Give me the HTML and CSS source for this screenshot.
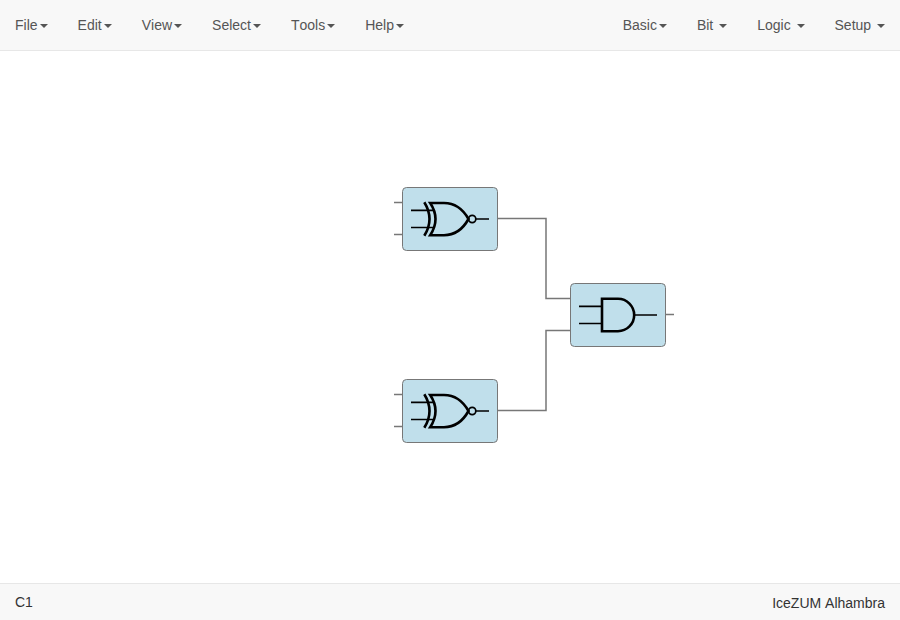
FILE: index.html
```html
<!DOCTYPE html>
<html lang="en">
<head>
<meta charset="utf-8">
<title>Icestudio</title>
<link rel="stylesheet" href="styles.css">
</head>
<body>
<nav class="navbar">
  <ul class="menu">
    <li><a>File<b class="caret"></b></a></li>
    <li><a>Edit<b class="caret"></b></a></li>
    <li><a>View<b class="caret"></b></a></li>
    <li><a>Select<b class="caret"></b></a></li>
    <li><a>Tools<b class="caret"></b></a></li>
    <li><a>Help<b class="caret"></b></a></li>
  </ul>
  <ul class="menu">
    <li><a>Basic<b class="caret"></b></a></li>
    <li><a>Bit <b class="caret"></b></a></li>
    <li><a>Logic <b class="caret"></b></a></li>
    <li><a>Setup <b class="caret"></b></a></li>
  </ul>
</nav>
<main class="paper">
  <svg class="graph" width="900" height="532" viewBox="0 51 900 532">
    <defs>
      <g id="xnor">
        <path class="port" d="M-8 15.5H0M-8 47.5H0"/>
        <rect class="block" x=".5" y=".5" width="95" height="63" rx="4"/>
        <path class="lead" d="M9 23.3H32M9 40.5H32M74 32H87"/>
        <path class="gate" d="M22.3 15.2Q32.7 32 22.3 48.8"/>
        <path class="gate" d="M28.2 16H42C51 16 60 20.5 66.5 32C60 43.7 51 48.200 42 48.200H28.200Q38.800 32 28.200 16Z"/>
        <circle class="bubble" cx="70.200" cy="32" r="3.600"/>
      </g>
      <g id="and">
        <rect class="block" x=".5" y=".5" width="95" height="63" rx="4"/>
        <path class="lead" d="M9 23.3H32M9 40.5H32M65 32H87"/>
        <path class="gate" d="M32 15.8H48A16.2 16.2 0 0 1 48 48.2H32Z"/>
        <path class="port" d="M96 31.5H104"/>
      </g>
    </defs>
    <path class="wire" d="M498 218.5H546V298.5H570"/>
    <path class="wire" d="M498 410.5H546V330.5H570"/>
    <use href="#xnor" x="402" y="187"/>
    <use href="#xnor" x="402" y="379"/>
    <use href="#and" x="570" y="283"/>
  </svg>
</main>
<footer class="footer">
  <span class="project">C1</span>
  <span class="board">IceZUM Alhambra</span>
</footer>
</body>
</html>
```
FILE: styles.css
```css
* { box-sizing: border-box; }
body {
  margin: 0;
  height: 100vh;
  display: flex;
  flex-direction: column;
  overflow: hidden;
  background: #fff;
  color: #333;
  font: 14px/20px "Liberation Sans", Arial, sans-serif;
  font-kerning: none;
}
.navbar {
  flex: 0 0 51px;
  display: flex;
  justify-content: space-between;
  background: #f8f8f8;
  border-bottom: 1px solid #e7e7e7;
}
.menu {
  display: flex;
  margin: 0;
  padding: 0;
  list-style: none;
}
.menu a {
  display: block;
  padding: 15px;
  color: #555;
}
.caret {
  display: inline-block;
  width: 0;
  height: 0;
  margin-left: 2px;
  vertical-align: middle;
  border-top: 4px solid;
  border-right: 4px solid transparent;
  border-left: 4px solid transparent;
}
.paper { flex: 1; min-height: 0; }
.graph { display: block; }
.block { fill: #c0dfeb; stroke: #777; stroke-width: 1; }
.wire, .port { fill: none; stroke: #777; stroke-width: 1.5; }
.lead { fill: none; stroke: #000; stroke-width: 1.7; }
.gate { fill: none; stroke: #000; stroke-width: 2.6; }
.bubble { fill: none; stroke: #000; stroke-width: 1.7; }
.footer {
  flex: 0 0 37px;
  display: flex;
  justify-content: space-between;
  padding: 8px 15px 0;
  background: #f8f8f8;
  border-top: 1px solid #e7e7e7;
}
.board { padding-top: 1px; }
```
